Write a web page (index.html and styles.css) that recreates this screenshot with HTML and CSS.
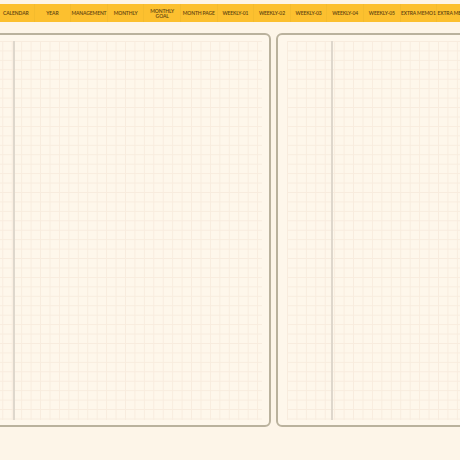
FILE: index.html
```html
<!DOCTYPE html>
<html>
<head>
<meta charset="utf-8">
<link rel="stylesheet" href="styles.css">
</head>
<body>
<nav class="tabs">
  <div class="tab">CALENDAR</div>
  <div class="tab">YEAR</div>
  <div class="tab">MANAGEMENT</div>
  <div class="tab">MONTHLY</div>
  <div class="tab">MONTHLY<br>GOAL</div>
  <div class="tab">MONTH PAGE</div>
  <div class="tab">WEEKLY-01</div>
  <div class="tab">WEEKLY-02</div>
  <div class="tab">WEEKLY-03</div>
  <div class="tab">WEEKLY-04</div>
  <div class="tab">WEEKLY-05</div>
  <div class="tab">EXTRA MEMO1</div>
  <div class="tab">EXTRA MEMO2</div>
</nav>
<main class="spread">
  <section class="page page-left">
    <div class="grid grid-left"><div class="rule rule-left"></div></div>
  </section>
  <section class="page page-right">
    <div class="grid grid-right"><div class="rule rule-right"></div></div>
  </section>
</main>
</body>
</html>
```
FILE: styles.css
```css
html, body {
  margin: 0;
  padding: 0;
  background: #fdf5e8;
  overflow: hidden;
  width: 460px;
  height: 460px;
}
body {
  font-family: "Lato", "DejaVu Sans", sans-serif;
}
.tabs {
  display: flex;
  margin-top: 4px;
  margin-left: -2px;
  height: 18px;
  width: max-content;
  background: #fcc02f;
}
.tab {
  flex: 0 0 36.6px;
  width: 36.6px;
  min-width: 0;
  box-sizing: border-box;
  display: flex;
  align-items: center;
  justify-content: center;
  text-align: center;
  font-size: 5px;
  line-height: 5px;
  font-weight: 600;
  color: #5e4210;
  white-space: nowrap;
  letter-spacing: -0.12px;
  border-right: 1px solid #f4bb2d;
  padding-top: 1px;
}
.spread {
  display: flex;
  gap: 5px;
  margin-top: 11px;
  margin-left: -30px;
}
.page {
  flex: 0 0 auto;
  box-sizing: border-box;
  height: 394px;
  border: 2px solid #bab29d;
  border-radius: 6px;
  background: #fef7eb;
  padding-top: 6px;
  padding-bottom: 5px;
}
.page-left {
  width: 301px;
  padding-right: 7px;
}
.page-right {
  width: 300px;
  padding-left: 9px;
}
.grid {
  height: 100%;
  display: flex;
  background-color: #fef7eb;
  background-image:
    linear-gradient(to right, #f8ecde 1px, transparent 1px),
    linear-gradient(to bottom, #f8ecde 1px, transparent 1px);
  background-size: 9.45px 9.45px;
}
.grid-left {
  background-position: 2px 0;
}
.grid-right {
  background-position: 0 0;
}
.rule {
  flex: 0 0 2px;
  height: 100%;
  background: #ded7cc;
}
.rule-left {
  margin-left: 41px;
}
.rule-right {
  margin-left: 44px;
}
```
